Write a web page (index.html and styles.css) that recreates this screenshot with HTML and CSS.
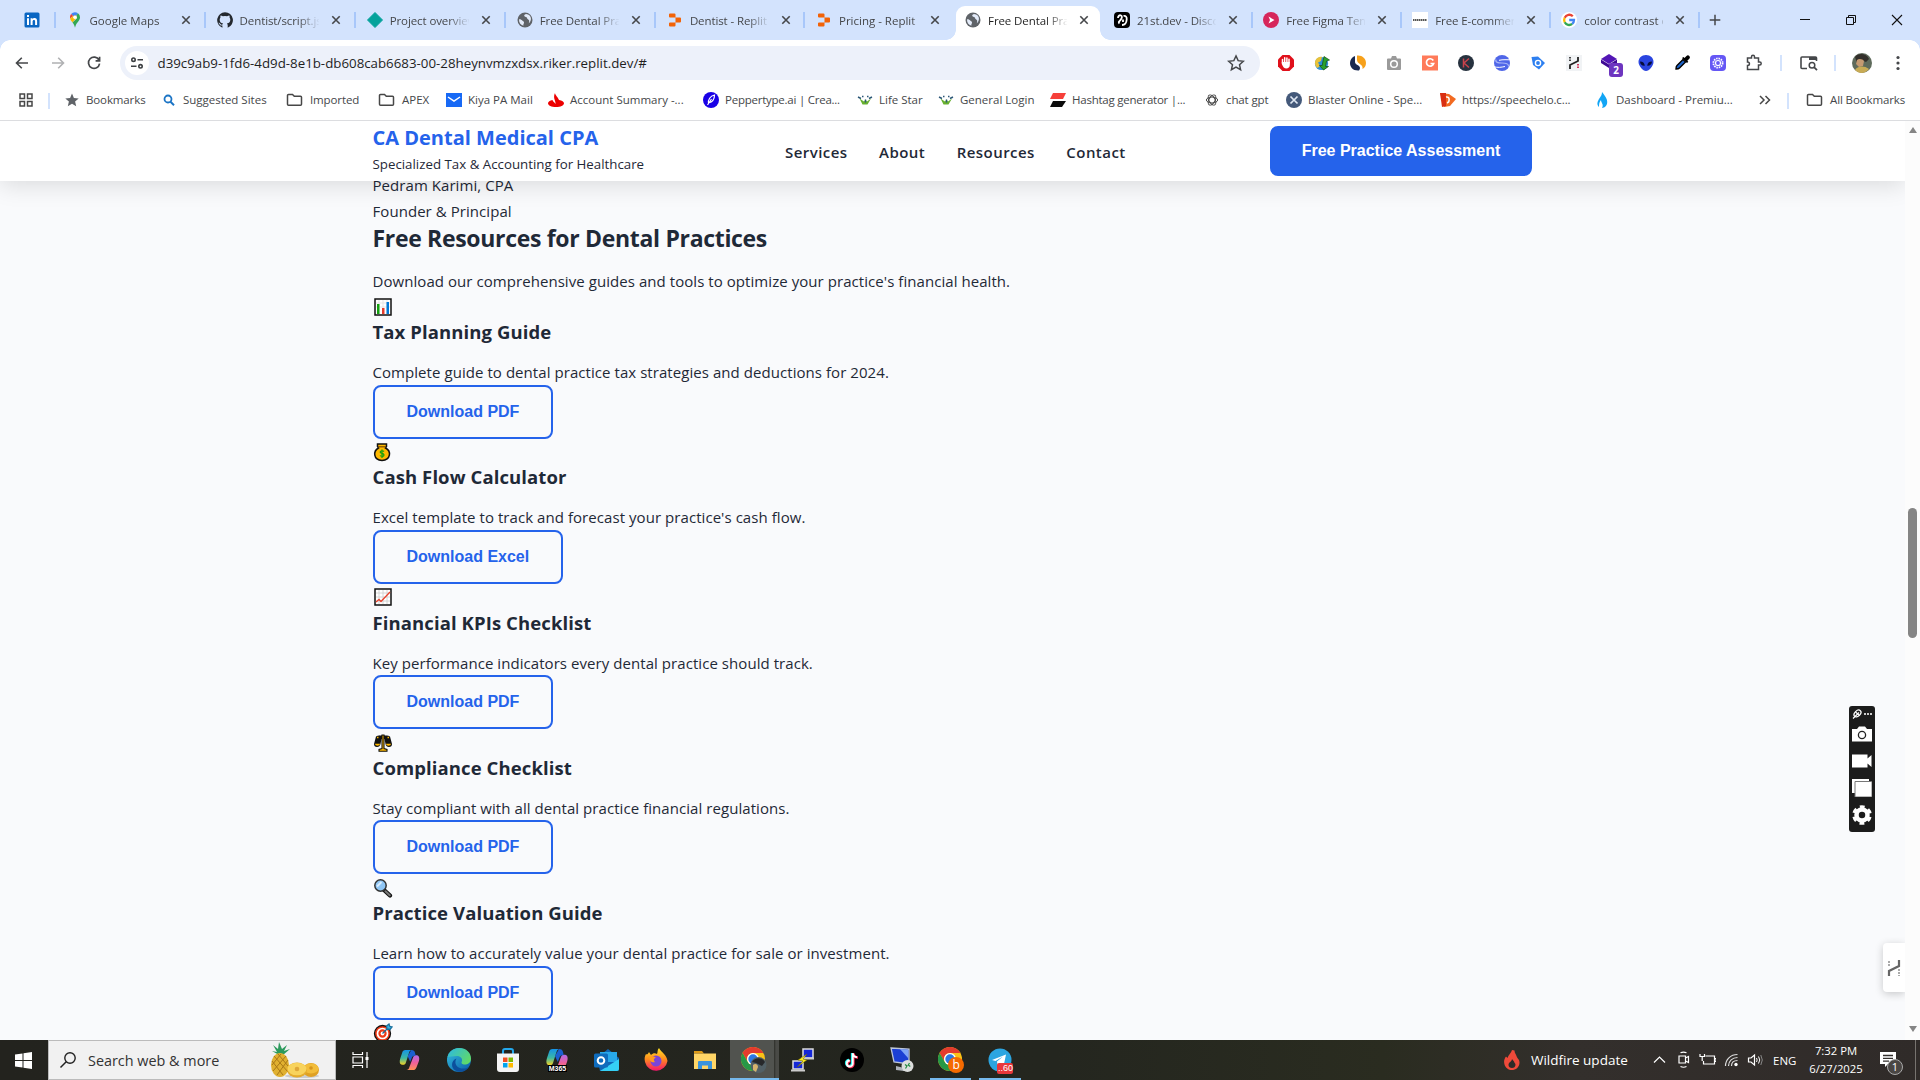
FILE: index.html
```
<!DOCTYPE html>
<html lang="en">
<head>
<meta charset="utf-8">
<title>Free Dental Practice Assessment</title>
<link rel="stylesheet" href="styles.css">
</head>
<body>
<svg class="defs" width="0" height="0">
  <symbol id="x" viewBox="0 0 10 10"><path d="M1.3 1.3l7.4 7.4M8.7 1.3L1.3 8.7" stroke="#45474a" stroke-width="1.6" fill="none"/></symbol>
  <symbol id="globe" viewBox="0 0 16 16"><circle cx="8" cy="8" r="7.5" fill="#5f6368"/><path d="M2 7.2c1.5-.2 2.6.5 3.200 1.300.8 1 2 .7 1.800 2.200-.1 1.100-.9 1.500-.6 3C3.500 12.900 1.800 10.500 2 7.200zM9 2c-1.700.6-2.200 1.300-1.500 2.200.7.9 2.300.3 2.500 1.700.2 1.300 1.600 1.300 2 2.400.3 1 .3 2-.3 3 3-1.800 3.200-7-.6-8.700z" fill="#e3ebf9"/></symbol>
  <symbol id="replit" viewBox="0 0 16 16"><path d="M3 1.500h4.500a1 1 0 0 1 1 1v3H3a1 1 0 0 1-1-1v-2a1 1 0 0 1 1-1zM8.500 5.500H13a1 1 0 0 1 1 1v3a1 1 0 0 1-1 1H8.500zM3 10.500h5.500v3a1 1 0 0 1-1 1H3a1 1 0 0 1-1-1v-2a1 1 0 0 1 1-1z" fill="#f26207"/></symbol>
  <symbol id="folder" viewBox="0 0 17 16"><path d="M1.500 3.500a1 1 0 0 1 1-1h4l1.800 1.800h6.200a1 1 0 0 1 1 1v7a1 1 0 0 1-1 1h-12a1 1 0 0 1-1-1z" fill="none" stroke="#474747" stroke-width="1.500"/></symbol>
  <symbol id="star-tree" viewBox="0 0 16 16"><path d="M2.500 6.500L7 9.500l1.500-2 1.500 2 4-3-3.500 6H5.500z" fill="#67b02f"/><path d="M1 5l3 1.500M15 5l-3 1.500M5 4.500h1.500M10 4.500h1.500M8.500 7.500v3" stroke="#2c5878" stroke-width="1.400"/></symbol>
  <symbol id="chrome" viewBox="0 0 24 24"><circle cx="12" cy="12" r="12" fill="#fbc116"/><path d="M1.600 6A12 12 0 0 1 22.400 6H12a6 6 0 0 0-5.200 9z" fill="#e33b2e"/><path d="M1.600 6A12 12 0 0 0 12 24l5.200-9a6 6 0 0 1-10.400 0z" fill="#279847"/><circle cx="12" cy="12" r="6" fill="#fff"/><circle cx="12" cy="12" r="4.700" fill="#2b78e4"/></symbol>
  <symbol id="copilot" viewBox="0 0 24 24"><path d="M3 17C1 16 1 13 2 10l2-6c.6-2 1.500-3 3.500-3H15c-2 0-3 1-3.500 3L8 15c-.7 2-2 2.600-5 2z" fill="url(#gA)"/><path d="M21 7c2 1 2 4 1 7l-2 5c-.8 2.500-2 4-4.500 4H8.500c2 0 2.700-1 3.300-3L16 9c.7-2 2-2.600 5-2z" fill="url(#gB)"/><path d="M14 1c2.500 0 3.500 1 4 3l.7 3C16 7 15 8 14.300 10l-1.500 4L10 8z" fill="#1b5fd0"/></symbol>
  <linearGradient id="gA" x1="0" y1="0" x2="0" y2="1"><stop offset="0" stop-color="#1493e8"/><stop offset=".55" stop-color="#3db8a2"/><stop offset="1" stop-color="#f4d122"/></linearGradient>
  <linearGradient id="gB" x1="0" y1="0" x2="0" y2="1"><stop offset="0" stop-color="#b06be8"/><stop offset=".5" stop-color="#ee5f9b"/><stop offset="1" stop-color="#ff9152"/></linearGradient>
  <linearGradient id="gE" x1="0" y1="0" x2="1" y2="1"><stop offset="0" stop-color="#34c1e0"/><stop offset="1" stop-color="#0b59a6"/></linearGradient>
  <linearGradient id="gG" x1="0" y1="0" x2="1" y2=".6"><stop offset="0" stop-color="#2bb8e6"/><stop offset="1" stop-color="#5fd96a"/></linearGradient>
  <linearGradient id="gF" x1="0" y1="0" x2="0" y2="1"><stop offset="0" stop-color="#ffe226"/><stop offset=".5" stop-color="#ff8a1e"/><stop offset="1" stop-color="#f5156c"/></linearGradient>
</svg>

<header class="tabs">
  <div class="pinned"><svg width="16" height="16" viewBox="0 0 16 16"><rect x=".5" y=".5" width="15" height="15" rx="1.500" fill="#0a66c2"/><path d="M3 6.300h2V13H3zM3 3h2v2H3zM6.600 6.300h1.900v.9c.5-.8 1.200-1.100 2.100-1.100 1.700 0 2.500 1 2.500 3V13h-2V9.500c0-1-.3-1.600-1.100-1.600-.9 0-1.400.6-1.400 1.700V13h-2z" fill="#fff"/></svg></div>
  <div class="tab sep"><svg class="fav" viewBox="0 0 16 16"><path d="M8 .3a5 5 0 0 0-3.900 1.800L8 5.300l3-4A5 5 0 0 0 8 .3z" fill="#4285f4"/><path d="M4.100 2.100a5 5 0 0 0-1 4.500l3.200-2.700z" fill="#ea4335"/><path d="M3.100 6.600c.4 1.600 1.500 2.800 2.400 4L10 5.200a2.400 2.400 0 0 0-3.700-1.300z" fill="#fbbc04"/><path d="M11 1.300l-1.500 2 .5 3-4.500 4.300C7 12.500 7.400 13.500 8 15.800c.7-2.700 1.300-3.700 2.900-5.700C12.300 8.300 13 7 13 5.300a5 5 0 0 0-2-4z" fill="#34a853"/><circle cx="8" cy="5.300" r="1.800" fill="#fff"/></svg><span class="wide">Google Maps</span><svg class="x"><use href="#x"/></svg></div>
  <div class="tab sep"><svg class="fav" viewBox="0 0 16 16"><path d="M8 .2a8 8 0 0 0-2.600 15.500v-2.300c-2 .3-2.700-.7-3-1.500-.3-.5-.5-.8-1-1 1-.2 1.600.5 2 1.200.5.6 1.200.8 2 .4.1-.5.400-.9.700-1.100C3.500 11 2.700 9.500 2.700 7.700c0-.9.300-1.600.8-2.200-.2-.6-.2-1.300.1-2.100.8 0 1.600.4 2.300.9a8 8 0 0 1 4.200 0c.7-.5 1.500-.9 2.300-.9.3.8.3 1.500.1 2.100.5.600.8 1.300.8 2.200 0 1.800-.8 3.300-3.400 3.700.5.400.8 1 .8 1.900v2.400A8 8 0 0 0 8 .2z" fill="#24292f"/></svg><span>Dentist/script.js at</span><svg class="x"><use href="#x"/></svg></div>
  <div class="tab sep"><svg class="fav" viewBox="0 0 16 16"><path d="M8 .5L15.500 8 8 15.500.5 8z" fill="#05a29b" stroke="#05a29b"/></svg><span>Project overview</span><svg class="x"><use href="#x"/></svg></div>
  <div class="tab sep"><svg class="fav"><use href="#globe"/></svg><span>Free Dental Practice</span><svg class="x"><use href="#x"/></svg></div>
  <div class="tab sep"><svg class="fav"><use href="#replit"/></svg><span>Dentist - Replit</span><svg class="x"><use href="#x"/></svg></div>
  <div class="tab sep"><svg class="fav"><use href="#replit"/></svg><span class="wide">Pricing - Replit</span><svg class="x"><use href="#x"/></svg></div>
  <div class="tab active"><svg class="fav"><use href="#globe"/></svg><span>Free Dental Practice</span><svg class="x"><use href="#x"/></svg></div>
  <div class="tab"><svg class="fav" viewBox="0 0 16 16"><rect width="16" height="16" rx="4" fill="#000"/><path d="M4 6c0-2 1.500-3.200 3-2.500S8 6.500 6.500 8 4 10 5.500 11.500M9.500 4c2-.8 3.500 1 3.200 3.500C12.500 10.500 11 13 8 13M9 7.500v2.500" fill="none" stroke="#fff" stroke-width="1.800"/></svg><span>21st.dev - Discover</span><svg class="x"><use href="#x"/></svg></div>
  <div class="tab sep"><svg class="fav" viewBox="0 0 16 16"><circle cx="8" cy="8" r="8" fill="#d6265b"/><path d="M5.500 4.500l6 3.500-6 3.500 1.500-3.500z" fill="#fff"/></svg><span>Free Figma Templates</span><svg class="x"><use href="#x"/></svg></div>
  <div class="tab sep"><svg class="fav" viewBox="0 0 16 16"><path d="M0 0h16v16H0z" fill="#fff"/><path d="M1 8h14" stroke="#555" stroke-width="1.800" stroke-dasharray="1.500 .5"/></svg><span>Free E-commerce</span><svg class="x"><use href="#x"/></svg></div>
  <div class="tab sep"><svg class="fav" viewBox="0 0 16 16"><circle cx="8" cy="8" r="8" fill="#fff"/><g fill="none" stroke-width="2.300"><path d="M11.800 4.200A5 5 0 0 0 3.700 5.700" stroke="#ea4335"/><path d="M3.700 5.700a5 5 0 0 0 0 4.600" stroke="#fbbc04"/><path d="M3.700 10.300a5 5 0 0 0 7.500 1.600" stroke="#34a853"/><path d="M11.200 11.900A5 5 0 0 0 13 8H8.200" stroke="#4285f4"/></g></svg><span class="wide">color contrast checker</span><svg class="x"><use href="#x"/></svg></div>
  <div class="newtab"><svg width="12" height="12" viewBox="0 0 12 12"><path d="M6 .7v10.600M.7 6h10.600" stroke="#45474a" stroke-width="1.500"/></svg></div>
  <div class="winctl">
    <svg viewBox="0 0 12 12"><path d="M1 5.500h10" stroke="#111"/></svg>
    <svg viewBox="0 0 12 12"><path d="M1.500 3.500h7v7h-7zM3.500 3.500v-2h7v7h-2" fill="none" stroke="#111"/></svg>
    <svg viewBox="0 0 12 12"><path d="M1 1l10 10M11 1L1 11" stroke="#111" stroke-width="1.100"/></svg>
  </div>
</header>

<div class="toolbar">
  <div class="navbtns">
    <svg viewBox="0 0 16 16"><path d="M14 8H2.800M7.800 2.700L2.500 8l5.300 5.300" fill="none" stroke="#45474a" stroke-width="1.600"/></svg>
    <svg viewBox="0 0 16 16"><path d="M2 8h11.200M8.200 2.700L13.500 8l-5.300 5.300" fill="none" stroke="#b0b1b3" stroke-width="1.600"/></svg>
    <svg viewBox="0 0 16 16"><path d="M13 5A5.600 5.600 0 1 0 13.600 8.600M13.600 1.800v4H9.600" fill="none" stroke="#45474a" stroke-width="1.700"/></svg>
  </div>
  <div class="omnibox">
    <span class="site"><svg width="14" height="14" viewBox="0 0 14 14"><g fill="none" stroke="#3c3f42" stroke-width="1.600"><circle cx="3.500" cy="3.700" r="1.700"/><path d="M7.500 3.700H13M1 10.300h5.500"/><circle cx="10.500" cy="10.300" r="1.700"/></g></svg></span>
    <span class="url">d39c9ab9-1fd6-4d9d-8e1b-db608cab6683-00-28heynvmzxdsx.riker.replit.dev/#</span>
    <svg class="star" viewBox="0 0 16 16"><path d="M8 1.700l1.900 4.200 4.600.5-3.400 3.100 1 4.500L8 11.700 3.900 14l1-4.500L1.500 6.400l4.600-.5z" fill="none" stroke="#45474a" stroke-width="1.300"/></svg>
  </div>
  <div class="exts">
    <svg viewBox="0 0 18 18"><path d="M5.500 1h7L17 5.500v7L12.500 17h-7L1 12.500v-7z" fill="#e0101b"/><path d="M5.500 9V5.500M7.700 8V3.800M9.900 8V4M12 9V5.300" stroke="#fff" stroke-width="1.500" stroke-linecap="round"/><path d="M4.800 8h8v3c0 2-1.500 3.500-3.500 3.500S6 13 4.800 10z" fill="#fff"/></svg>
    <svg viewBox="0 0 18 18"><circle cx="8.500" cy="9.500" r="6.600" fill="#2d8fd6"/><path d="M2 9c0-4 3-6.500 7-6.200L8 7 5 8.500l2 3.500-2.500 2C3 13 2 11 2 9z" fill="#e8c23a"/><path d="M11 2.500L16.500 6l-3 1-1 5.500h3L10.500 16 6.500 11.500h2.700L10 7z" fill="#2aa32b" stroke="#154d15" stroke-width=".7"/></svg>
    <svg viewBox="0 0 18 18"><path d="M6 2v6c0 3 5 3 5 6 0 1-.3 1.800-1 2.500C4 17 1 13 1 9c0-3 2-6 5-7z" fill="#18284f"/><path d="M8 1.500c5-.6 9 3 9 7.500 0 3-1.500 5-3.500 6 1-5-5.500-5-5.500-9z" fill="#f7a11b"/></svg>
    <svg viewBox="0 0 18 18"><path d="M3 4.500h3l1-2.500h4l1 2.500h3a1 1 0 0 1 1 1V15a1 1 0 0 1-1 1H3a1 1 0 0 1-1-1V5.500a1 1 0 0 1 1-1z" fill="#9a9a9a"/><circle cx="9" cy="10" r="3.300" fill="none" stroke="#fff" stroke-width="1.500"/></svg>
    <svg viewBox="0 0 18 18"><path d="M1 1.500h16v15H1z" fill="#ff7a59"/><path d="M12.300 6.500A3.700 3.700 0 1 0 12.700 9.500H9.500" fill="none" stroke="#fff" stroke-width="1.700"/></svg>
    <svg viewBox="0 0 18 18"><circle cx="9" cy="9" r="8" fill="#27323f"/><path d="M6.500 4.500v9M12 4.500L7 9l5 4.500" stroke="#c8434b" stroke-width="1.500" fill="none"/></svg>
    <svg viewBox="0 0 18 18"><circle cx="9" cy="9" r="8" fill="#4f66e8"/><path d="M3 5.500c-1 3 2 3.500 6 3.500s7 .8 6.500 3.500" stroke="#a9b5f7" stroke-width="1.200" fill="none"/><path d="M0 12.500c5 1.500 8 .8 12 0M6 6.300c4-.9 8-.5 12-.5" stroke="#fff" stroke-width="1" fill="none"/></svg>
    <svg viewBox="0 0 18 18"><path d="M2.500 3l6.500-.5L16 9l-6 6.500-6-4.500z" fill="#2d7ff0"/><circle cx="9" cy="9" r="2.600" fill="none" stroke="#fff" stroke-width="1.400"/></svg>
    <svg viewBox="0 0 18 18"><path d="M1 1h16v16H1z" fill="#f1f3f5"/><path d="M5 15v-4l8-4V3" fill="none" stroke="#222" stroke-width="1.800"/><path d="M5 3v5" stroke="#333" stroke-width="1.800" stroke-dasharray="1.500 1"/><path d="M13 10v5" stroke="#d2264f" stroke-width="1.800" stroke-dasharray="1.500 1"/></svg>
    <div class="badged"><svg viewBox="0 0 18 18"><path d="M8 0l8 5-8 5-8-5z" fill="#5316b5"/><path d="M0 5.500l8 5 8-5v3.500l-8 5-8-5z" fill="#3f0a94"/></svg><b>2</b></div>
    <svg viewBox="0 0 18 18"><path d="M9 1c4.500 0 7.500 3 7.500 7S12 17 9 17 1.500 12 1.500 8 4.500 1 9 1z" fill="#2a45e0"/><path d="M3 7.500c3 0 4.500 1.500 4.800 4.300C4.800 12 3 10 3 7.500zM15 7.500c-3 0-4.500 1.500-4.800 4.300C13.200 12 15 10 15 7.500z" fill="#060c3a"/></svg>
    <svg viewBox="0 0 18 18"><path d="M3 15c0-2 0-2.500 1-3.500l6-6 2.500 2.500-6 6c-1 1-1.500 1-3.500 1z" fill="#1c63c9" stroke="#000" stroke-width="1.400"/><path d="M9 4l5 5 1.300-1.200-1-1 2-2c1-1 .7-2 0-2.800s-1.900-1-2.800 0l-2 2-1-1z" fill="#000"/></svg>
    <svg viewBox="0 0 18 18"><rect x="1" y="1" width="16" height="16" rx="4" fill="#6557f5"/><circle cx="9" cy="9" r="2.500" fill="none" stroke="#fff" stroke-width="1.200"/><circle cx="9" cy="9" r="4.600" fill="none" stroke="#fff" stroke-width="1.800" stroke-dasharray="1.500 .9"/></svg>
    <svg viewBox="0 0 18 18"><path d="M2.500 4h4V2.800a1.500 1.500 0 0 1 3 0V4h4v4h1.200a1.500 1.500 0 0 1 0 3h-1.200v4.500h-11v-4c2.600 0 2.600-3.500 0-3.500z" fill="none" stroke="#45474a" stroke-width="1.500"/></svg>
  </div>
  <i class="bar"></i>
  <svg class="media" viewBox="0 0 20 18"><path d="M8 14.500H3a1 1 0 0 1-1-1V4a1 1 0 0 1 1-1h13.500a1 1 0 0 1 1 1v3" fill="none" stroke="#45474a" stroke-width="1.600"/><path d="M10 3h7.500v3H10z" fill="#45474a"/><circle cx="13" cy="11.200" r="2.800" fill="none" stroke="#45474a" stroke-width="1.500"/><path d="M15 13.200l3 3" stroke="#45474a" stroke-width="1.700"/></svg>
  <i class="bar b2"></i>
  <svg class="avatar" viewBox="0 0 20 20"><circle cx="10" cy="10" r="10" fill="#5f6b5c"/><path d="M3 4c4-5 12-3 14 2l-3 3-7-3-2 4z" fill="#33302b"/><path d="M5 7c2-2 6-1 7 1l-1 5-4 1-3-3z" fill="#c59a72"/><path d="M3 17c2-4 9-5 14-1-4 5-10 5-14 1z" fill="#c8ab55"/></svg>
  <svg class="menu" viewBox="0 0 4 16"><circle cx="2" cy="2.500" r="1.600"/><circle cx="2" cy="8" r="1.600"/><circle cx="2" cy="13.500" r="1.600"/></svg>
</div>

<nav class="bookmarks">
  <div class="apps"><svg viewBox="0 0 16 16"><path d="M2 2h4.500v4.500H2zM9.500 2H14v4.500H9.500zM2 9.500h4.500V14H2zM9.500 9.500H14V14H9.500z" fill="none" stroke="#474747" stroke-width="1.500"/></svg></div>
  <div><svg viewBox="0 0 16 16"><path d="M8 1.500l1.900 4.500 4.800.4-3.600 3.200 1.100 4.700L8 11.800l-4.200 2.500 1.100-4.700L1.300 6.400l4.800-.4z" fill="#5f6368"/></svg><span class="tight">Bookmarks</span></div>
  <div><svg viewBox="0 0 16 16"><circle cx="7" cy="7" r="3.500" fill="none" stroke="#1b74c5" stroke-width="1.800"/><path d="M9.500 9.700l3.500 3.500" stroke="#1b74c5" stroke-width="2"/></svg><span>Suggested Sites</span></div>
  <div class="f"><svg><use href="#folder"/></svg><span class="tight">Imported</span></div>
  <div class="f"><svg><use href="#folder"/></svg><span>APEX</span></div>
  <div><svg viewBox="0 0 16 16"><path d="M0 1h16v14H0z" fill="#1769f5"/><path d="M2 5l6 4 6-4" fill="none" stroke="#fff" stroke-width="1.500"/></svg><span>Kiya PA Mail</span></div>
  <div><svg viewBox="0 0 16 16"><path d="M7 1c0 2 3 4 4 7 3 .5 5 1.700 5 3.200C16 13.500 12.500 15 8 15s-8-1.500-8-3.800c0-1.500 2-2.700 4.500-3.200 0 1 2.500 3 3 4C8 9 4.500 6 7 1z" fill="#ec0000"/></svg><span>Account Summary -...</span></div>
  <div><svg viewBox="0 0 16 16"><circle cx="8" cy="8" r="8" fill="#1900e6"/><path d="M11.500 3C7 4 5 8 5.500 11c4-1 6-4 6-8zM4.500 13l4-6" fill="none" stroke="#fff" stroke-width="1.200"/></svg><span class="tighter">Peppertype.ai | Crea...</span></div>
  <div><svg><use href="#star-tree"/></svg><span>Life Star</span></div>
  <div><svg><use href="#star-tree"/></svg><span>General Login</span></div>
  <div><svg viewBox="0 0 16 16"><path d="M3 1h13l-3 6H0z" fill="#f6403a"/><path d="M3 9h13l-4 6H0z" fill="#0b0b0b"/></svg><span class="tighter">Hashtag generator |...</span></div>
  <div><svg viewBox="0 0 16 16"><g fill="none" stroke="#444" stroke-width="1"><ellipse cx="8" cy="8" rx="5.600" ry="3"/><ellipse cx="8" cy="8" rx="5.600" ry="3" transform="rotate(60 8 8)"/><ellipse cx="8" cy="8" rx="5.600" ry="3" transform="rotate(120 8 8)"/></g></svg><span class="tight">chat gpt</span></div>
  <div><svg viewBox="0 0 16 16"><circle cx="8" cy="8" r="8" fill="#44597a"/><path d="M4.500 11.500l7-7M4.500 4.500l7 7" stroke="#dfe7f2" stroke-width="1.700"/></svg><span>Blaster Online - Spe...</span></div>
  <div><svg viewBox="0 0 16 16"><path d="M0 1l9 1 7 5-6 7-6 1z" fill="#f26a21"/><path d="M0 1h6v13l-4 1z" fill="#d92f12"/><path d="M6 5c4-1 4 5 1 6" fill="none" stroke="#fff" stroke-width="1.500"/></svg><span class="tight">https://speechelo.c...</span></div>
  <div><svg viewBox="0 0 16 16"><path d="M8 0c4 5 6 8 5 12-1 3-4 4-5 4 2-4-1-5-1-8-2 2-2 5-2 7-3-3-1-6 0-8 2-3 3-4 3-7z" fill="#12a5f5"/></svg><span>Dashboard - Premiu...</span></div>
  <div class="more"><svg viewBox="0 0 16 16"><path d="M3 4l4 4-4 4M8.500 4l4 4-4 4" fill="none" stroke="#474747" stroke-width="1.500"/></svg></div>
  <div class="f"><svg><use href="#folder"/></svg><span class="tight">All Bookmarks</span></div>
</nav>

<main class="viewport">
  <div class="page">
    <div class="site-header">
      <div class="container">
        <div class="brand"><h1>CA Dental Medical CPA</h1><p>Specialized Tax &amp; Accounting for Healthcare</p></div>
        <nav class="links"><a>Services</a><a>About</a><a>Resources</a><a>Contact</a></nav>
        <button class="cta">Free Practice Assessment</button>
      </div>
    </div>
    <section class="content">
      <p>Pedram Karimi, CPA</p>
      <p>Founder &amp; Principal</p>
      <h2>Free Resources for Dental Practices</h2>
      <p>Download our comprehensive guides and tools to optimize your practice's financial health.</p>
      <article>
        <div class="emoji"><svg viewBox="0 0 20 20"><path d="M2 2h16v16H2z" fill="#fff" stroke="#111" stroke-width="1.500"/><path d="M6 3v14M10 3v14M14 3v14M3 6h14M3 10h14" stroke="#ddd" stroke-width=".7"/><path d="M4 7h2.500v10H4z" fill="#13a10e"/><path d="M9 11h2.500v6H9z" fill="#e33b2e"/><path d="M13.500 5H16v12h-2.500z" fill="#0078d7"/></svg></div>
        <h3>Tax Planning Guide</h3>
        <p>Complete guide to dental practice tax strategies and deductions for 2024.</p>
        <button>Download PDF</button>
      </article>
      <article>
        <div class="emoji"><svg viewBox="0 0 20 20"><path d="M4.500 2h9v2.500l-1 1.500c6 3 5.500 12-3.500 12.500C0 18 0 9 5.500 6l-1-1.500z" fill="#ffb900" stroke="#111" stroke-width="1.500"/><path d="M5 4.800h8" stroke="#7a4a00" stroke-width="1.200"/><path d="M11 9.500c-1-1.200-4-1-3.800.8.2 1.500 3.800.8 3.800 2.700 0 1.800-3 1.800-4 .5M9 7.500v8.500" fill="none" stroke="#13a10e" stroke-width="1.200"/></svg></div>
        <h3>Cash Flow Calculator</h3>
        <p>Excel template to track and forecast your practice's cash flow.</p>
        <button>Download Excel</button>
      </article>
      <article>
        <div class="emoji"><svg viewBox="0 0 20 20"><path d="M2 2h16v16H2z" fill="#fff" stroke="#111" stroke-width="1.500"/><path d="M6 3v14M10 3v14M14 3v14M3 6h14M3 10h14M3 14h14" stroke="#ccc" stroke-width=".8"/><path d="M3 15l3-2.500 2 2L17 5" fill="none" stroke="#e8412c" stroke-width="1.300"/></svg></div>
        <h3>Financial KPIs Checklist</h3>
        <p>Key performance indicators every dental practice should track.</p>
        <button>Download PDF</button>
      </article>
      <article>
        <div class="emoji"><svg viewBox="0 0 20 20"><path d="M3 3.500c2-1.500 4-.5 7-1.500 3 1 5 0 7 1.500l2 7.500c0 2-1 3-3 3s-3-1-3.500-3l-1-5h-3l-1 5C7 13 6 14 4 14s-3-1-3-3z" fill="#111"/><path d="M2 10.800h5c0 2.500-5 2.500-5 0zM13 10.800h5c0 2.500-5 2.500-5 0z" fill="#ffb900"/><path d="M4 4.500h1.500M14.500 4.500H16" stroke="#ffb900" stroke-width="1.300"/><path d="M9 2h2v13.500l3 1v1.700H6v-1.700l3-1z" fill="#ffb900" stroke="#111" stroke-width="1.100"/></svg></div>
        <h3>Compliance Checklist</h3>
        <p>Stay compliant with all dental practice financial regulations.</p>
        <button>Download PDF</button>
      </article>
      <article>
        <div class="emoji"><svg viewBox="0 0 20 20"><path d="M11 12l6 5.500" stroke="#111" stroke-width="4.200" stroke-linecap="round"/><path d="M12.500 13.300l4.200 3.900" stroke="#767676" stroke-width="2.200" stroke-linecap="round"/><circle cx="7.500" cy="7.500" r="5.700" fill="#8fc6f5" stroke="#333" stroke-width="1.500"/><path d="M4 8.500L8.500 4" stroke="#d7ecff" stroke-width="2"/></svg></div>
        <h3>Practice Valuation Guide</h3>
        <p>Learn how to accurately value your dental practice for sale or investment.</p>
        <button>Download PDF</button>
      </article>
      <article>
        <div class="emoji"><svg viewBox="0 0 20 20"><circle cx="9.500" cy="10.500" r="8" fill="#f03a17" stroke="#111" stroke-width="1.300"/><circle cx="9.500" cy="10.500" r="5" fill="none" stroke="#fff" stroke-width="1.700"/><circle cx="9.500" cy="10.500" r="1.900" fill="#fff"/><path d="M9.500 10.500L14 6l-.5-3L16 1l.7 2.300L19 4l-2 2.500-3-.5" fill="#31b5e8" stroke="#1c6f9c" stroke-width="1.300"/></svg></div>
      </article>
    </section>
    <div class="side-tab"><svg width="14" height="18" viewBox="0 0 14 18"><path d="M2 17v-5l10-5V1" fill="none" stroke="#666" stroke-width="2.200"/><path d="M2 2v6M12 10v7" stroke="#aaa" stroke-width="2" stroke-dasharray="2 1"/></svg></div>
  </div>
  <div class="scroll"><i class="up"></i><i class="thumb"></i><i class="down"></i></div>
</main>

<aside class="capture">
  <svg width="20" height="10" viewBox="0 0 20 10"><ellipse cx="5.500" cy="4.500" rx="4" ry="2.700" transform="rotate(-45 5.500 4.500)" fill="none" stroke="#fff" stroke-width="1.300"/><path d="M1 9.500l6-6M3.500 3l4 3.500" stroke="#fff" stroke-width="1.200"/><path d="M12 4h2v2h-2zM15 4h2v2h-2zM18 4h2v2h-2z" fill="#ccc"/></svg>
  <svg width="20" height="16" viewBox="0 0 20 16"><path d="M0 3h5l2-2.500h6L15 3h5v12.500H0z" fill="#fff"/><circle cx="10" cy="9" r="3.600" fill="#fff" stroke="#222" stroke-width="1.300"/></svg>
  <svg width="20" height="14" viewBox="0 0 20 14"><path d="M0 .5h15.500v4L19.500 1v12l-4-3.500v4H0z" fill="#fff"/></svg>
  <svg width="20" height="18" viewBox="0 0 20 18"><path d="M0 0h17v14H0z" fill="#fff"/><path d="M3 2.500h17V18H3z" fill="#fff" stroke="#777" stroke-width="1"/></svg>
  <svg width="20" height="20" viewBox="0 0 20 20"><circle cx="10" cy="10" r="5.500" fill="none" stroke="#fff" stroke-width="4.500"/><circle cx="10" cy="10" r="8.300" fill="none" stroke="#fff" stroke-width="3" stroke-dasharray="4.700 3.990" stroke-dashoffset="-2"/></svg>
</aside>

<footer class="taskbar">
  <div class="start"><svg width="17" height="17" viewBox="0 0 17 17"><path d="M0 2.500l7.500-1V8H0zM8.500 1.300L17 0v8H8.500zM0 9h7.500v6.500L0 14.500zM8.500 9H17v8l-8.500-1.300z" fill="#fff"/></svg></div>
  <div class="search"><svg width="18" height="18" viewBox="0 0 18 18"><circle cx="11" cy="7" r="5.200" fill="none" stroke="#222" stroke-width="1.400"/><path d="M7.200 10.800L1.500 16.500" stroke="#222" stroke-width="1.500"/></svg><span>Search web &amp; more</span>
    <svg class="pine" width="52" height="38" viewBox="0 0 52 38"><ellipse cx="34" cy="35" rx="17" ry="2" fill="#ccc"/><path d="M11 14L4 10l5 1-4-7 5 4 1-7 3 7 5-4-3 6 6-2-7 6z" fill="#2c9a5c"/><ellipse cx="12" cy="24" rx="9" ry="12" fill="#e0b030"/><path d="M4 20l11 14M6 15l14 16M10 13l10 12M20 19L9 34M18 15L5 30M13 13L4 24" stroke="#a97817" stroke-width="1"/><ellipse cx="43" cy="29" rx="8" ry="7" fill="#dfa124"/><ellipse cx="43" cy="27.500" rx="7.500" ry="5" fill="#f2bd3a"/><circle cx="43" cy="27" r="1.800" fill="#d6951c"/><ellipse cx="29" cy="29" rx="10" ry="7.500" fill="#e5ac2c"/><ellipse cx="29" cy="28" rx="9.500" ry="6.300" fill="#f8d35c"/><circle cx="29" cy="28" r="2.300" fill="#dfa737"/></svg></div>
  <div class="apps-row">
    <div><svg width="18" height="16" viewBox="0 0 18 16"><path d="M1 0v2.500h9.500V0M1 16v-2.500h9.500V16M1 5h9.500v6H1zM15 0v16" fill="none" stroke="#fff" stroke-width="1.200"/><path d="M13.500 5h3v3h-3z" fill="#fff"/></svg></div>
    <div><svg width="23" height="22" viewBox="0 0 24 24"><use href="#copilot"/></svg></div>
    <div><svg width="24" height="24" viewBox="0 0 24 24"><circle cx="12" cy="12" r="12" fill="url(#gE)"/><path d="M.5 9C2 3.500 6.500 0 12 0c7.500 0 12 5 12 10.500 0 4-3 6-6.500 6-2 0-3.700-1-2.700-3 1.200-3-1.300-5.500-5-5.500-3.800 0-7.300 1-9.300 1z" fill="url(#gG)"/><path d="M9.500 10.500c-3 5 .5 10 6.500 10 2.500 0 4.500-.5 6-1.800C19 23.500 13 25 8.500 22.500c-5-3-4.500-10 1-12z" fill="#0c4f9c"/></svg></div>
    <div><svg width="24" height="24" viewBox="0 0 24 24"><path d="M7 6V3a2 2 0 0 1 2-2h6a2 2 0 0 1 2 2v3" fill="none" stroke="#24a8ec" stroke-width="2"/><path d="M1 5.500h22V21a3 3 0 0 1-3 3H4a3 3 0 0 1-3-3z" fill="#f4f4f4"/><path d="M7 9.500h4.500V14H7z" fill="#f25022"/><path d="M12.500 9.500H17V14h-4.500z" fill="#7fba00"/><path d="M7 15h4.500v4.500H7z" fill="#00a4ef"/><path d="M12.500 15H17v4.500h-4.500z" fill="#ffb900"/></svg></div>
    <div class="m365"><svg width="24" height="24" viewBox="0 0 24 24"><use href="#copilot"/></svg><b>M365</b></div>
    <div><svg width="25" height="24" viewBox="0 0 25 24"><path d="M3 10L14 1l11 9v11a2 2 0 0 1-2 2H6z" fill="#1066b5"/><path d="M6 4h17v10H6z" fill="#28a8ea"/><path d="M6 23l19-12v10a2 2 0 0 1-2 2z" fill="#35d0f5"/><rect y="5.500" width="14" height="14" rx="1.500" fill="#0f6cbd"/><circle cx="7" cy="12.500" r="3.300" fill="none" stroke="#fff" stroke-width="2"/></svg></div>
    <div><svg width="24" height="24" viewBox="0 0 24 24"><path d="M2 6c1 1 2 0 3-2l2 3c2-2 4-2 6-1 1-2 0-4 2-6 2 4 8 7 8.500 13A11.500 11.500 0 0 1 1 14C0 10 1 8 2 6z" fill="url(#gF)"/><circle cx="12" cy="13" r="5.500" fill="#7a45d9"/><path d="M5 9c3-1 5-1 7 1-2 0-3 2-1 4-3 1-6-1-6-5z" fill="#ff9a1f"/></svg></div>
    <div><svg width="22" height="20" viewBox="0 0 22 20"><path d="M0 1h8l2 2.500H0z" fill="#dd9a17"/><path d="M0 3.500h22V19H0z" fill="#ffd566"/><path d="M4 19v-7a1 1 0 0 1 1-1h12a1 1 0 0 1 1 1v7h-4v-3.500H8V19z" fill="#3a93dc"/></svg></div>
    <div class="cur open"><svg width="26" height="26" viewBox="0 0 26 26"><use href="#chrome" width="24" height="24"/><circle cx="17.500" cy="18" r="8" fill="#526066"/><path d="M11 15c3-5 10-5 13 0l-3 4-6-3z" fill="#27282a"/><path d="M12 18c2-2 5-1 5 2l-2 5-3-2z" fill="#d6b36d"/></svg></div>
    <div><svg width="24" height="24" viewBox="0 0 24 24"><path d="M12 1h10v9H12zM2 13h10v8H2z" fill="#1427d8" stroke="#ddd" stroke-width="1.500"/><path d="M10 10.500h13M0 22.500h14" stroke="#ccc" stroke-width="2"/><path d="M16 6l-9 6 5 1-6 6 10-7-4-1z" fill="#ffee1f" stroke="#665c00" stroke-width=".5"/></svg></div>
    <div><svg width="24" height="24" viewBox="0 0 24 24"><circle cx="12" cy="12" r="12" fill="#000"/><g fill="none" stroke-width="2.300"><path d="M12 5v10a3 3 0 1 1-3-3" stroke="#25f4ee"/><path d="M13.500 5.500c.3 2.500 2 4 4.500 4M13.500 6v10a3 3 0 1 1-3-3" stroke="#fe2c55"/><path d="M12.800 5.200c.3 2.500 2 4 4.200 4M12.800 5.500v10a3 3 0 1 1-3-3" stroke="#fff" stroke-width="1.800"/></g></svg></div>
    <div><svg width="24" height="26" viewBox="0 0 24 26"><path d="M1 1l18 1v15L4 15z" fill="#1b3fd4" stroke="#bcc6d8" stroke-width="1.300"/><path d="M10 2l8 .8V11z" fill="#7fa5f5"/><path d="M6 19l8 2v3l-8-1z" fill="#aeb3ba"/><circle cx="17.500" cy="19" r="6" fill="#dcdedd"/><path d="M15 17.500l2 1.500-1.500 2.500M19.500 16l-1.200 2 2 1.500" fill="none" stroke="#218a42" stroke-width="1.200"/></svg></div>
    <div class="open"><svg width="26" height="26" viewBox="0 0 26 26"><use href="#chrome" width="24" height="24"/><circle cx="18" cy="18" r="8" fill="#f56a00"/></svg><em>b</em></div>
    <div class="open tele"><svg width="24" height="24" viewBox="0 0 24 24"><circle cx="12" cy="12" r="11.500" fill="#2ca5e0"/><path d="M4 12l14-5.500-2.500 12-4-3-2 2-.5-4 6-5-7.500 4.500z" fill="#fff"/></svg><b>..60</b></div>
  </div>
  <div class="tray">
    <svg class="flame" width="16" height="20" viewBox="0 0 16 20"><path d="M8 0c-.5 3-4 5-4.500 8L2 6.500C0 9-.3 12 .5 14.500 1.500 18 4.500 20 8 20s7.500-2.500 7.500-7.500C15.500 9 13 8.500 12.500 6 12 4 10.500 3 10.500.5z" fill="#ef4a3a"/><path d="M8 9c-.3 3-3.500 3-3.500 6 0 1.800 1.500 3 3.500 3s3.500-1.300 3.500-3.300c0-1.500-1.500-2-1.500-3.200z" fill="#2f2b28"/></svg>
    <span class="news">Wildfire update</span>
    <svg width="17" height="14" viewBox="0 0 14 14"><path d="M1.500 9.500L7 4l5.500 5.500" fill="none" stroke="#fff" stroke-width="1.200"/></svg>
    <svg width="17" height="18" viewBox="0 0 14 18"><path d="M2.500 5h6.500v7H2.500zM9 7l3-1.500v6L9 10M4 1.800q3-1.500 6 0M4 15.500q3 1.500 6 0" fill="none" stroke="#fff" stroke-width="1.200"/></svg>
    <svg width="17" height="14" viewBox="0 0 17 14"><path d="M6.500 3h9v8H4.500V8M15.500 5.500H17v3h-1.500M1 1v2.500h4.500V1M3.200 3.500V8" fill="none" stroke="#fff" stroke-width="1.200"/></svg>
    <svg width="17" height="14" viewBox="0 0 14 14"><g fill="none" stroke="#ddd" stroke-width="1.200"><path d="M1 13C1 6.500 6 1.500 13 1.500M4 13c0-5 4-8.500 9-8.500M7 13c0-3.500 2.500-5.500 6-5.500"/></g><circle cx="11.500" cy="11.500" r="1.700" fill="#fff"/></svg>
    <svg width="17" height="14" viewBox="0 0 16 14"><path d="M1 5h2.500L7 2v10L3.500 9H1z" fill="none" stroke="#fff" stroke-width="1.200"/><path d="M9 5q1.300 2 0 4M11 3.500q2.500 3.500 0 7" fill="none" stroke="#fff"/><path d="M13.300 2q3 5 0 10" fill="none" stroke="#888"/></svg>
    <span class="lang">ENG</span>
    <span class="clock"><span>7:32 PM</span><span>6/27/2025</span></span>
    <span class="notif"><svg width="16" height="16" viewBox="0 0 16 16"><path d="M0 0h16v12H8l-3 3v-3H0z" fill="#fff"/><path d="M3 3.500h10M3 6.300h10M3 9.100h6" stroke="#332f2d" stroke-width="1.300"/></svg><b>1</b></span>
    <i class="peek"></i>
  </div>
</footer>
</body>
</html>
```
FILE: styles.css
```
* { box-sizing: border-box; }
body { margin: 0; width: 1920px; height: 1080px; overflow: hidden; display: flex; flex-direction: column; font-family: "Open Sans", "Noto Sans", sans-serif; color: #1f2937; background: #fff; }
svg { display: block; flex: none; }
.defs { position: absolute; }
h1, h2, h3, p { margin: 0; }

/* Tab strip */
.tabs { height: 40px; flex: none; display: flex; background: #d3e3fd; }
.pinned { width: 56px; padding: 12px 0 0 24px; flex: none; }
.tab { position: relative; width: 149.1px; flex: none; display: flex; align-items: center; padding: 0 14px 0 10.5px; font-size: 11.5px; letter-spacing: -.1px; color: #45474a; }
.tab:nth-child(-n+5) { width: 150.1px; }
.tab.sep::before { content: ""; position: absolute; left: -2px; top: 12px; width: 2px; height: 16px; background: #a8c7fa; }
.fav { width: 16px; height: 16px; }
.tab span { width: 79px; margin-left: 7px; overflow: hidden; white-space: nowrap; -webkit-mask-image: linear-gradient(90deg, #000 58px, transparent 80px); mask-image: linear-gradient(90deg, #000 58px, transparent 80px); }
.tab span.wide { letter-spacing: 0; -webkit-mask-image: linear-gradient(90deg, #000 73px, transparent 81px); mask-image: linear-gradient(90deg, #000 73px, transparent 81px); }
.x { width: 10px; height: 10px; margin-left: 12px; }
.tab.active { color: #1f1f1f; background: #fff; margin: 6px 4px 0 1px; width: 144px; border-radius: 9px 9px 0 0; padding: 0 0 6px 9.5px; }
.tab.active::before, .tab.active::after { content: ""; position: absolute; bottom: 0; width: 10px; height: 10px; }
.tab.active::before { left: -10px; background: radial-gradient(circle at 0 0, transparent 9.5px, #fff 10px); }
.tab.active::after { right: -10px; background: radial-gradient(circle at 100% 0, transparent 9.5px, #fff 10px); }
.newtab { position: relative; width: 30px; padding: 14px 0 0 9.5px; }
.newtab::before { content: ""; position: absolute; left: -2px; top: 12px; width: 2px; height: 16px; background: #a8c7fa; }
.winctl { margin-left: auto; display: flex; align-items: center; gap: 34px; padding-right: 17px; }
.winctl svg { width: 12px; height: 12px; }

/* Address bar and extensions */
.toolbar { height: 46px; flex: none; display: flex; align-items: center; background: radial-gradient(circle at 10px 10px, #fff 9.5px, #d3e3fd 10px) 0 0 / 10px 10px no-repeat, radial-gradient(circle at 0 10px, #fff 9.5px, #d3e3fd 10px) 100% 0 / 10px 10px no-repeat, #fff; }
.navbtns { width: 120px; flex: none; display: flex; gap: 20px; padding-left: 14px; }
.navbtns svg { width: 16px; height: 16px; }
.omnibox { width: 1140px; height: 34px; flex: none; display: flex; align-items: center; background: #edf1fa; border-radius: 17px; padding-left: 5px; }
.site { width: 24px; height: 24px; border-radius: 50%; background: #fff; display: grid; place-items: center; }
.url { margin-left: 8.5px; font-size: 13.3px; color: #1f1f1f; white-space: nowrap; }
.star { width: 18px; height: 18px; margin: 0 15px 0 auto; }
.exts { display: flex; gap: 18px; margin-left: 17px; }
.exts svg { width: 18px; height: 18px; }
.badged { position: relative; }
.badged b { position: absolute; left: 8px; top: 9px; width: 14px; height: 14px; border-radius: 3px; background: #6d35bf; color: #fff; font-size: 10px; line-height: 14px; text-align: center; }
.bar { width: 2px; height: 16px; background: #d3e3fd; margin: 0 17px; }
.media { width: 20px; height: 18px; }
.bar.b2 { margin: 0 16px 0 15px; }
.avatar { width: 20px; height: 20px; }
.menu { width: 4px; height: 16px; margin-left: 24px; fill: #45474a; }

/* Bookmarks bar */
.bookmarks { height: 35px; flex: none; display: grid; grid-template-columns: 46px 97px 125px 92px 68px 102px 155px 154px 81px 112px 154px 82px 154px 154px 163px 49px 1fr; padding: 0 0 6px 18px; border-bottom: 1px solid #dcdde0; font-size: 11.5px; color: #45474a; }
.bookmarks div { position: relative; display: flex; align-items: center; gap: 6px; white-space: nowrap; }
.bookmarks span { margin-top: -2px; }
.bookmarks svg { width: 16px; height: 16px; }
.bookmarks .f { gap: 7px; }
.bookmarks .f svg { width: 17px; }
.bookmarks .apps::after, .bookmarks .more::after { content: ""; position: absolute; left: 30px; top: 7px; width: 2px; height: 16px; background: #d3e3fd; }
.bookmarks .tight { letter-spacing: -.12px; }
.bookmarks .tighter { letter-spacing: -.24px; }

/* Web page */
.viewport { height: 919px; flex: none; display: flex; }
.page { position: relative; width: 1905px; height: 919px; overflow: hidden; background: #f9fafc; }
.site-header { position: relative; height: 60px; background: #fff; box-shadow: 0 4px 24px rgba(0, 0, 0, .13); z-index: 1; }
.container { display: grid; grid-template-columns: 412.5px 485px 262px; height: 60px; margin-left: 372.5px; align-items: center; }
.brand { margin-top: -6px; }
h1 { font-size: 20px; line-height: 32px; color: #2563eb; font-weight: 700; }
.brand p { font-size: 13.3px; line-height: 20px; white-space: nowrap; }
.links { display: flex; gap: 31.5px; font-size: 15px; font-weight: 600; letter-spacing: .45px; padding-top: 1px; }
button { display: block; height: 54px; padding: 0 32px; border: 2px solid #2563eb; border-radius: 8px; background: transparent; color: #2563eb; font: 700 16px "Liberation Sans", sans-serif; white-space: nowrap; margin: -1px 0 1px; }
.cta { height: 50px; padding: 0; width: 262px; background: #2563eb; color: #fff; margin: 0; }
.content { padding-left: 372.5px; margin-top: -8px; font-size: 15px; line-height: 25.6px; }
.content p { white-space: nowrap; letter-spacing: .06px; }
h2 { font-size: 23px; line-height: 28.8px; margin-bottom: 16px; letter-spacing: -.32px; }
h3 { font-size: 18.5px; line-height: 24px; margin-bottom: 16px; letter-spacing: .1px; }
.emoji { height: 25.6px; padding-top: 2.5px; }
.emoji svg { width: 20px; height: 20px; }
.side-tab { position: absolute; right: 0; top: 822px; width: 22px; height: 49px; border-radius: 4px 0 0 4px; background: #fff; box-shadow: 0 2px 8px rgba(0, 0, 0, .2); display: grid; place-items: center; }
.scroll { width: 15px; background: #fcfcfc; display: flex; flex-direction: column; align-items: center; }
.up, .down { border: 4.5px solid transparent; border-top: 0; border-bottom: 6px solid #858585; margin-top: 6px; }
.thumb { width: 9px; height: 130px; border-radius: 5px; background: #858585; margin-top: 375px; }
.down { border-bottom: 0; border-top: 6px solid #858585; margin: auto 0 8px; }

/* Floating capture widget */
.capture { position: absolute; left: 1849px; top: 706px; width: 26px; height: 126px; border-radius: 3px; background: #1c1c1c; display: flex; flex-direction: column; align-items: center; padding-top: 3px; }
.capture svg { margin-bottom: 7px; }
.capture svg:nth-child(2) { margin-bottom: 12px; }
.capture svg:nth-child(3) { margin-bottom: 11px; }
.capture svg:nth-child(4) { margin-bottom: 8px; }

/* Taskbar */
.taskbar { height: 40px; flex: none; display: flex; background: linear-gradient(90deg, #23231e, #24261f 55%, #2a2c20 72%, #332f2c 82%, #302b29); color: #fff; }
.start { width: 48px; padding: 12px 0 0 15px; }
.search { width: 288px; display: flex; align-items: center; background: #f1f1f1; border: 1px solid #bbb; padding-left: 10px; color: #333; font-size: 14.4px; }
.search span { margin-left: 11px; white-space: nowrap; }
.pine { margin-left: auto; margin-right: 15px; }
.apps-row { display: flex; }
.apps-row > div { position: relative; width: 49.2px; display: grid; place-items: center; }
.apps-row .cur { background: linear-gradient(90deg, #51534f 44.5px, #343530 44.5px, #494a46 46px); }
.apps-row .open::after { content: ""; position: absolute; left: 4px; right: 4px; bottom: 0; height: 2px; background: #76b9ed; }
.apps-row .cur::after { left: 0; right: 0; }
.apps-row em { position: absolute; left: 22px; top: 17px; width: 16px; font: 12px/16px "Open Sans", sans-serif; text-align: center; }
.m365 b { position: absolute; left: 15px; top: 25px; padding: 0 1px; background: #000; font: 700 7px/7px "Liberation Sans", sans-serif; color: #fff; }
.tele b { position: absolute; left: 22px; top: 23px; width: 16px; height: 11px; border-radius: 2px; background: #e8383c; font: 9px/11px "Liberation Sans", sans-serif; text-align: center; }
.tray { margin-left: auto; display: flex; align-items: center; font-size: 12px; white-space: nowrap; }
.tray > svg { margin-right: 7px; }
.tray > .flame { margin-right: 11px; }
.news { font-size: 13.5px; width: 119.5px; }
.lang { width: 33px; margin-left: 2.5px; font-size: 11.5px; }
.clock { width: 60px; display: flex; flex-direction: column; align-items: center; line-height: 18px; font-size: 11.3px; }
.notif { position: relative; width: 35px; margin-left: 14px; }
.notif b { position: absolute; left: 7px; top: 7px; width: 16px; height: 16px; border: 1px solid #aaa; border-radius: 50%; background: #4a4644; font: 11px/14px "Open Sans", sans-serif; text-align: center; }
.peek { width: 1px; height: 40px; background: #77736f; margin-right: 4px; }
```
